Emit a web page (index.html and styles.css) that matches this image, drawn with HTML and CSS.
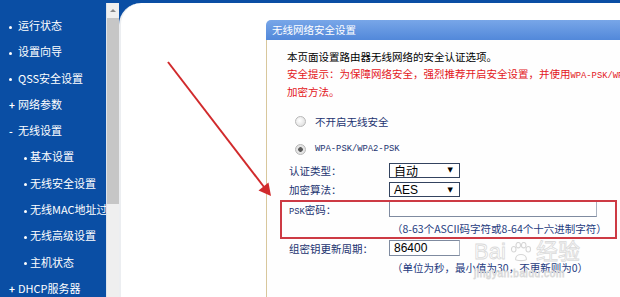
FILE: index.html
```html
<!DOCTYPE html>
<html lang="zh-CN">
<head>
    <meta charset="UTF-8">
    <meta name="viewport" content="width=device-width, initial-scale=1.0">
    <title>无线网络安全设置</title>
    <link rel="stylesheet" href="styles.css">
</head>
<body>

    <div class="frame">
        <ul class="menu">
            <li>运行状态</li>
            <li>设置向导</li>
            <li>QSS安全设置</li>
            <li class="plus">网络参数</li>
            <li class="minus">无线设置</li>
            <li class="sub">基本设置</li>
            <li class="sub">无线安全设置</li>
            <li class="sub">无线MAC地址过滤</li>
            <li class="sub">无线高级设置</li>
            <li class="sub">主机状态</li>
            <li class="plus">DHCP服务器</li>
        </ul>

        <div class="scroll">
            <div class="scroll-up"></div>
            <div class="scroll-thumb"></div>
        </div>

        <div class="panel">
            <div class="box">
                <div class="box-title">无线网络安全设置</div>
                <div class="box-body">
                    <p class="intro">本页面设置路由器无线网络的安全认证选项。</p>
                    <p class="intro warn">安全提示：为保障网络安全，强烈推荐开启安全设置，并使用<span class="mono">WPA-PSK/WPA2-PSK AES</span></p>
                    <p class="intro warn">加密方法。</p>

                    <div class="options">
                        <div class="option"><span class="radio"></span>不开启无线安全</div>
                        <div class="option"><span class="radio checked"></span><span class="mono">WPA-PSK/WPA2-PSK</span></div>
                    </div>

                    <div class="fields">
                        <div class="row">
                            <span class="label">认证类型：</span>
                            <span class="select">自动</span>
                        </div>
                        <div class="row">
                            <span class="label">加密算法：</span>
                            <span class="select latin">AES</span>
                        </div>
                        <div class="mark">
                            <div class="row">
                                <span class="label"><span class="mono">PSK</span>密码：</span>
                                <span class="input input-wide"></span>
                            </div>
                            <div class="row hint">（8-63个ASCII码字符或8-64个十六进制字符）</div>
                        </div>
                        <div class="row">
                            <span class="label">组密钥更新周期：</span>
                            <span class="input input-short">86400</span>
                        </div>
                        <div class="row hint">（单位为秒，最小值为30，不更新则为0）</div>
                    </div>
                </div>
            </div>
        </div>
    </div>

    <!-- 红色箭头标注 -->
    <svg class="arrow" width="620" height="297" viewBox="0 0 620 297">
        <line x1="168" y1="62" x2="264" y2="187" stroke="#d12a2c" stroke-width="2"/>
        <polygon points="271,196 258.5,190.5 268.5,182.5" fill="#d12a2c"/>
    </svg>

    <!-- 水印 -->
    <div class="watermark">
        <div class="wm-logo">Bai<svg width="26" height="20" viewBox="0 0 28 22"><g fill="none" stroke="#d6d6d6" stroke-width="1.2"><ellipse cx="6" cy="8" rx="2.5" ry="3"/><ellipse cx="11" cy="3.5" rx="2.5" ry="3"/><ellipse cx="17" cy="3.5" rx="2.5" ry="3"/><ellipse cx="22" cy="8" rx="2.5" ry="3"/><path d="M8 19 C8 12 20 12 20 19 C20 21 8 21 8 19 Z"/></g></svg>经验</div>
        <div class="wm-url">jingyan.baidu.com</div>
    </div>

</body>
</html>
```

FILE: styles.css
```css
* {
    margin: 0;
    padding: 0;
    box-sizing: border-box;
}
body {
    font-family: "Noto Sans CJK SC", sans-serif;
    background-color: #0a4ea4;
    height: 297px;
    overflow: hidden;
    position: relative;
}
.frame {
    display: flex;
    margin-top: 3px;
    height: 294px;
}

/* 左侧菜单 */
.menu {
    width: 106px;
    flex-shrink: 0;
    list-style: none;
    padding-top: 9px;
    overflow: hidden;
    white-space: nowrap;
    color: #fff;
    font-size: 11px;
}
.menu li {
    height: 26.3px;
    line-height: 26.3px;
    padding-left: 9px;
}
.menu li::before {
    content: "";
    display: inline-block;
    width: 3px;
    height: 3px;
    border-radius: 50%;
    background-color: #fff;
    margin-right: 6px;
    vertical-align: middle;
}
.menu .sub {
    padding-left: 24px;
}
.menu .sub::before {
    margin-right: 3px;
}
.menu .plus::before,
.menu .minus::before {
    content: "+";
    width: 6px;
    height: auto;
    background: none;
    font-weight: bold;
    font-size: 10px;
    margin-right: 3px;
    vertical-align: baseline;
}
.menu .minus::before {
    content: "-";
}

/* 滚动条 */
.scroll {
    width: 13px;
    flex-shrink: 0;
    background-color: #efefef;
    border-left: 1px solid #dde4ec;
}
.scroll-up {
    height: 15px;
    display: flex;
    align-items: center;
    justify-content: center;
}
.scroll-up::after {
    content: "";
    border-left: 3px solid transparent;
    border-right: 3px solid transparent;
    border-bottom: 3px solid #8a8a8a;
}
.scroll-thumb {
    height: 186px;
    background-color: #c6c6c6;
}

/* 右侧内容 */
.panel {
    flex: 1;
    background-color: #fff;
    border-top-left-radius: 22px;
    border-left: 2px solid #eceef1;
    padding: 17px 0 0 145px;
    overflow: hidden;
}
.box-title {
    height: 20px;
    line-height: 20px;
    padding-left: 6px;
    font-size: 10.5px;
    color: #fff;
    background: linear-gradient(#78a6e8, #5288da);
    border-top-left-radius: 5px;
}
.box-body {
    border-left: 1px solid #d8c79c;
    padding: 9px 0 0 20px;
    height: 260px;
    font-size: 10.5px;
    background-color: #fefefe;
}
.intro {
    line-height: 16.5px;
    color: #000;
    white-space: nowrap;
}
.warn {
    color: #e3171c;
}
.mono {
    font-family: "Liberation Mono", monospace;
    font-size: 8.8px;
}
.options {
    display: flex;
    flex-direction: column;
    gap: 8px;
    margin-top: 10.5px;
}
.option {
    display: flex;
    align-items: center;
    height: 20px;
    padding-left: 8px;
    color: #1c3370;
}
.radio {
    width: 11px;
    height: 11px;
    border-radius: 50%;
    border: 1px solid #b8b8b8;
    background: radial-gradient(circle at 40% 40%, #fff, #d8d8d8);
    margin-right: 9px;
}
.radio.checked {
    background: radial-gradient(circle, #5a5a5a 0 2px, #e4e4e4 2.6px);
}
.fields {
    margin-top: 1.5px;
}
.row {
    display: flex;
    align-items: center;
    height: 19.5px;
    color: #1c3370;
}
.label {
    width: 100px;
    margin-left: 2px;
}
.select {
    width: 71px;
    height: 15px;
    border: 1px solid #33435f;
    background-color: #fff;
    display: flex;
    align-items: center;
    justify-content: space-between;
    padding: 0 6px 0 4px;
    font-size: 12px;
    color: #000;
}
.select::after {
    content: "▼";
    font-family: "DejaVu Sans", sans-serif;
    font-size: 7px;
}
.latin,
.input {
    font-family: "Liberation Sans", Arial, sans-serif;
}
.input {
    height: 16px;
    border: 1px solid #7f8ba0;
    border-right-color: #a9b2c0;
    background-color: #fff;
    font-size: 12px;
    line-height: 14px;
    padding-left: 4px;
    color: #000;
}
.input-wide {
    width: 208px;
}
.input-short {
    width: 71px;
}
.hint {
    padding-left: 105px;
    color: #1f3b80;
    white-space: nowrap;
}
.mark {
    outline: 2px solid #cd3a44;
    outline-offset: -2px;
    margin-left: -7px;
    padding-left: 7px;
    width: 337px;
}

/* 标注 */
.arrow {
    position: absolute;
    left: 0;
    top: 0;
    pointer-events: none;
}
.watermark {
    position: absolute;
    left: 474px;
    top: 240px;
    color: rgba(255, 255, 255, 0.4);
    -webkit-text-stroke: 0.8px #dadada;
    pointer-events: none;
}
.wm-logo {
    display: flex;
    align-items: center;
    font-family: "Liberation Sans", Arial, sans-serif;
    font-size: 22px;
    line-height: 24px;
}
.wm-logo svg {
    margin: 0 2px;
}
.wm-url {
    margin-top: 4px;
    font-family: "Liberation Sans", Arial, sans-serif;
    font-size: 10px;
    line-height: 12px;
    letter-spacing: 0.6px;
}
```
